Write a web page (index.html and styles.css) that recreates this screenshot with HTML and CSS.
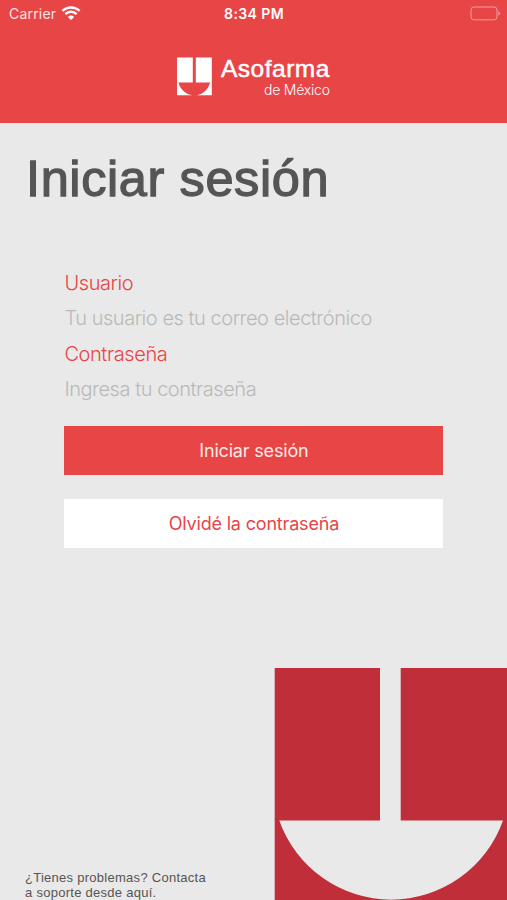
FILE: index.html
```html
<!DOCTYPE html>
<html lang="es">

<head>
    <meta charset="utf-8">
    <title>Asofarma de México</title>
    <link rel="stylesheet" href="styles.css">
</head>

<body>
    <header class="header">
        <div class="status-bar">
            <div class="carrier">
                <span class="carrier-name">Carrier</span>
                <svg class="wifi" width="20" height="15" viewBox="0 0 20 15">
                    <path d="M1.4 4.9a12.4 12.4 0 0 1 17.2 0M4.4 8.1a8 8 0 0 1 11.2 0" fill="none" stroke="#fff" stroke-width="2.4" />
                    <path d="M6.8 10.9a4.8 4.8 0 0 1 6.4 0L10 14z" fill="#fff" />
                </svg>
            </div>
            <span class="time">8:34 PM</span>
            <svg class="battery" width="31" height="15" viewBox="0 0 31 15">
                <rect x="1" y="1" width="26" height="12.8" rx="3" fill="none" stroke="#f4a0a1" stroke-width="1" />
                <path d="M28.4 5.2c2 .7 2 3.7 0 4.4z" fill="#f4a0a1" />
            </svg>
        </div>
        <div class="brand">
            <svg class="brand-logo" width="35" height="39" viewBox="0 -.5 35 39">
                <path d="M0 0h15.8v25H0zM18.8 0h16v25h-16z" />
                <path d="M0 24.8h1.4C3.5 32.5 9 37 15.5 37.8H0zM34.8 24.8h-1.6C31 32.5 26 37 19.2 37.8h15.6z" />
            </svg>
            <div class="brand-text">
                <span class="brand-name">Asofarma</span>
                <span class="brand-country">de México</span>
            </div>
        </div>
    </header>

    <main class="content">
        <h1 class="title">Iniciar sesión</h1>
        <form class="login">
            <label class="label" for="usuario">Usuario</label>
            <input class="input" type="text" id="usuario" placeholder="Tu usuario es tu correo electrónico">
            <label class="label" for="contrasena">Contraseña</label>
            <input class="input" type="password" id="contrasena" placeholder="Ingresa tu contraseña">
            <button class="btn btn-primary" type="submit">Iniciar sesión</button>
            <button class="btn btn-secondary" type="button">Olvidé la contraseña</button>
        </form>
    </main>

    <footer class="footer">
        <p class="support">¿Tienes problemas? Contacta<br>a soporte desde aquí.</p>
        <svg class="footer-logo" width="233" height="233" viewBox="0 0 233 233">
            <path d="M.7 1h105.3v152.5H.7zM126.7 1H233v152.5H126.7z" />
            <path d="M.7 153h4.6v.5A118.6 118.6 0 0 0 229 153.5v-.5h4V233H.7z" />
        </svg>
    </footer>
</body>

</html>
```
FILE: styles.css
```css
* {
    box-sizing: border-box;
}

body {
    margin: 0;
    height: 900px;
    display: flex;
    flex-direction: column;
    background-color: #e9e9e9;
    font-family: "Liberation Sans", Arial, sans-serif;
    overflow: hidden;
}

.header {
    height: 123px;
    background-color: #e84547;
    color: #fff;
}

.status-bar {
    display: grid;
    grid-template-columns: 1fr auto 1fr;
    align-items: center;
    height: 27px;
    padding: 0 6px 0 9px;
    font-family: Inter, sans-serif;
}

.carrier {
    display: flex;
    align-items: center;
    gap: 5px;
}

.carrier-name {
    font-size: 14px;
    letter-spacing: 0.2px;
    color: #fde3e3;
}

.time {
    margin-right: 2px;
    font-size: 14px;
    font-weight: 600;
    letter-spacing: 0.4px;
}

.battery {
    justify-self: end;
}

.brand {
    display: flex;
    padding: 30px 0 0 177px;
    gap: 9px;
}

.brand-logo {
    fill: #fff;
}

.brand-text {
    display: flex;
    flex-direction: column;
    align-items: flex-end;
}

.brand-name {
    font-size: 24.5px;
    line-height: 24px;
    letter-spacing: 0.5px;
    -webkit-text-stroke: 0.5px #fff;
}

.brand-country {
    font-family: Inter, sans-serif;
    font-size: 14px;
    font-weight: 300;
    line-height: 18px;
    letter-spacing: -0.2px;
}

.content {
    flex: 1;
}

.title {
    margin: 28px 0 0 26px;
    font-size: 50.5px;
    font-weight: normal;
    line-height: 56px;
    letter-spacing: 0.6px;
    color: #555;
    -webkit-text-stroke: 1.3px #555;
}

.login {
    display: flex;
    flex-direction: column;
    width: 379px;
    margin: 58px 0 0 64.4px;
}

.label,
.input {
    height: 35.5px;
    font-family: Inter, sans-serif;
    font-size: 20px;
    font-weight: 300;
    line-height: 35.5px;
}

.label {
    padding-top: 1px;
    color: #e84547;
    letter-spacing: -0.4px;
}

.input {
    padding: 0;
    border: none;
    outline: none;
    background: none;
    letter-spacing: -0.46px;
}

.input::placeholder {
    color: #b9b9b9;
}

.btn {
    height: 49px;
    padding: 0;
    border: none;
    font-family: Inter, sans-serif;
    font-size: 18px;
    letter-spacing: -0.18px;
    cursor: pointer;
}

.btn-primary {
    margin-top: 19px;
    background-color: #e84547;
    color: #fde9e6;
}

.btn-secondary {
    margin-top: 24.4px;
    background-color: #fff;
    color: #e84547;
}

.footer {
    display: flex;
    justify-content: space-between;
    align-items: flex-end;
}

.support {
    margin: 0 0 0 25px;
    font-size: 13px;
    line-height: 15px;
    letter-spacing: 0.27px;
    color: #555;
}

.footer-logo {
    display: block;
    fill: #c02f39;
}
```
